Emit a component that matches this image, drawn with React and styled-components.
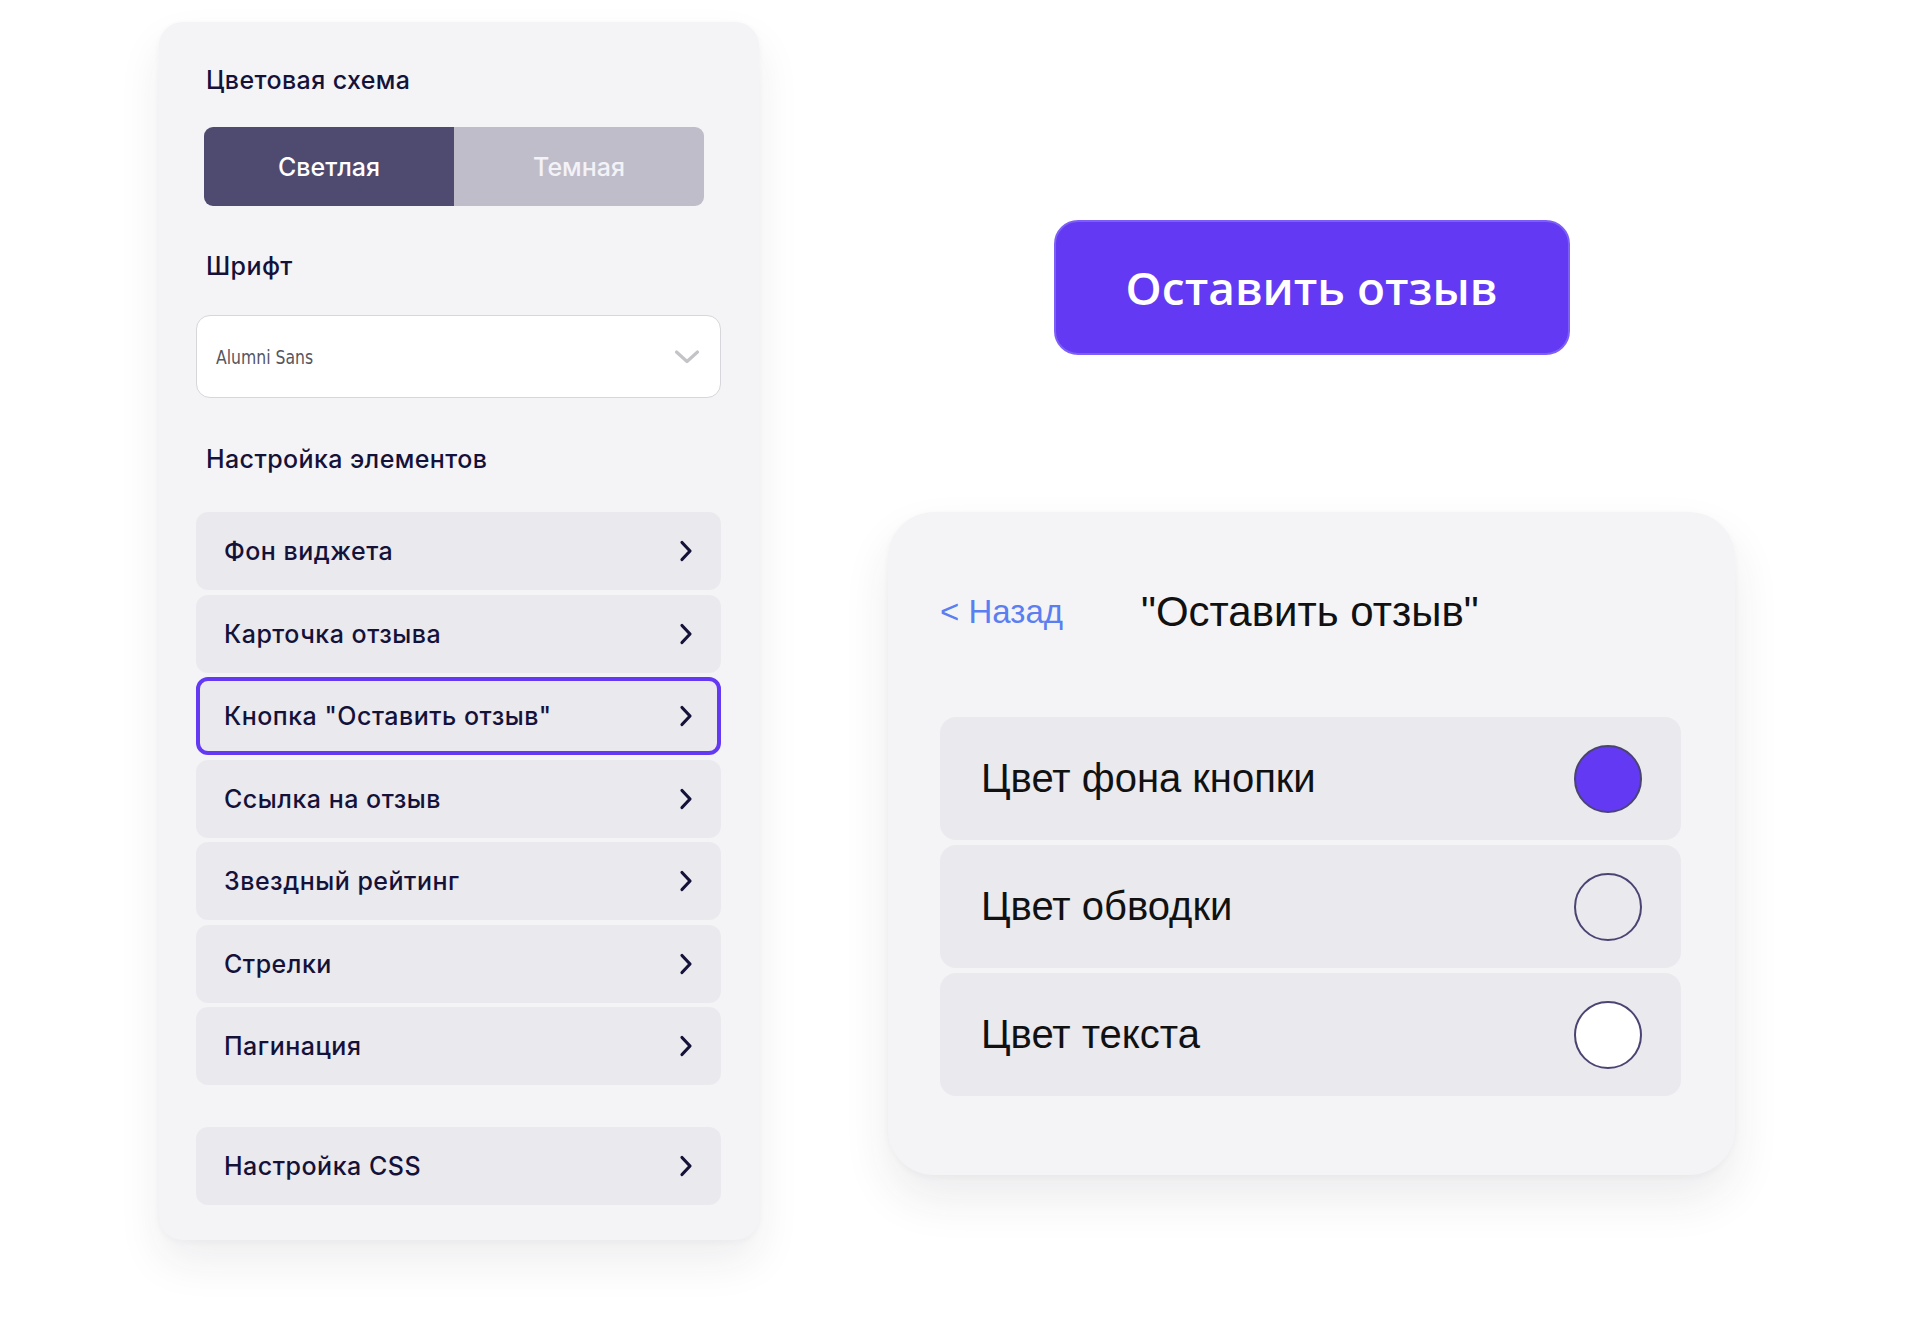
import React from 'react'
import styled, { createGlobalStyle, css } from 'styled-components'

const GlobalStyle = createGlobalStyle`
	body {
		margin: 0;
		background: #ffffff;
		font-family: Inter, "Noto Sans", sans-serif;
	}
`

const Page = styled.div`
	display: flex;
	align-items: flex-start;
	gap: 129px;
	padding: 22px 0 0 159px;
	min-height: 1299px;
`

// LEFT SETTINGS PANEL
const SettingsPanel = styled.div`
	width: 600px;
	box-sizing: border-box;
	padding: 43px 38px 35px 37px;
	background-color: #f4f4f6;
	border-radius: 24px;
	box-shadow: 0 22px 44px rgba(40, 40, 70, 0.08), 0 2px 6px rgba(40, 40, 70, 0.04);
	display: flex;
	flex-direction: column;
`
const Heading = styled.div`
	margin-left: 10px;
	font-size: 25px;
	line-height: 30px;
	font-weight: 500;
	color: #15123a;
	letter-spacing: 0.4px;
	margin-top: ${props => props.top || 0}px;
`
const Toggle = styled.div`
	display: flex;
	width: 500px;
	height: 79px;
	margin: 32px 0 0 8px;
	border-radius: 9px;
	overflow: hidden;
`
const ToggleOption = styled.div`
	flex: 1;
	display: flex;
	align-items: center;
	justify-content: center;
	font-size: 25px;
	font-weight: 500;
	color: #f3f2f7;
	background-color: #c0bdcb;
	${props =>
		props.active &&
		css`
			background-color: #4f4a6f;
			color: #ffffff;
		`
	};
`
const Select = styled.div`
	display: flex;
	align-items: center;
	justify-content: space-between;
	height: 83px;
	box-sizing: border-box;
	margin-top: 34px;
	padding: 0 20px 0 19px;
	background-color: #ffffff;
	border: 1.5px solid #d6d6db;
	border-radius: 14px;
`
const SelectValue = styled.span`
	font-family: "Liberation Sans Narrow", "DejaVu Sans Condensed", "Liberation Sans", sans-serif;
	font-size: 20px;
	color: #555560;
	transform: scaleX(0.87);
	transform-origin: left center;
`
const ItemList = styled.div`
	display: flex;
	flex-direction: column;
	gap: 4.5px;
	margin-top: ${props => props.top}px;
`
const Item = styled.div`
	display: flex;
	align-items: center;
	justify-content: space-between;
	height: 78px;
	box-sizing: border-box;
	padding: 0 28px 0 28px;
	background-color: #eae9ee;
	border-radius: 12px;
	font-size: 25px;
	font-weight: 500;
	color: #15123a;
	letter-spacing: 0.5px;
	${props =>
		props.selected &&
		css`
			border: 4px solid #6339f3;
			padding: 0 24px 0 24px;
		`
	};
`

const Chevron = () => (
	<svg width="14" height="22" viewBox="0 0 14 22" fill="none">
		<path d="M3 2.5 L11 11 L3 19.5" stroke="#15123a" strokeWidth="3.2" strokeLinecap="round" strokeLinejoin="round" />
	</svg>
)

const ChevronDown = () => (
	<svg width="26" height="16" viewBox="0 0 26 16" fill="none">
		<path d="M2.5 3 L13 12.5 L23.5 3" stroke="#c4c4c8" strokeWidth="3.2" strokeLinecap="round" strokeLinejoin="round" />
	</svg>
)

// RIGHT PREVIEW COLUMN
const PreviewColumn = styled.div`
	width: 847px;
	display: flex;
	flex-direction: column;
	align-items: center;
`
const ReviewButton = styled.div`
	margin-top: 198px;
	width: 516px;
	height: 135px;
	box-sizing: border-box;
	display: flex;
	align-items: center;
	justify-content: center;
	background-color: #6339f3;
	border: 2px solid #7d5ff6;
	border-radius: 24px;
	color: #ffffff;
	font-family: "Open Sans", "DejaVu Sans", sans-serif;
	font-weight: 600;
	font-size: 46px;
	padding-bottom: 2px;
`
const ElementPanel = styled.div`
	margin-top: 157px;
	width: 847px;
	box-sizing: border-box;
	padding: 80px 54px 79px 52px;
	background-color: #f4f4f6;
	border-radius: 46px;
	box-shadow: 0 24px 48px rgba(40, 40, 70, 0.09), 0 2px 6px rgba(40, 40, 70, 0.04);
	font-family: "Liberation Sans", Arial, sans-serif;
`
const PanelHeader = styled.div`
	display: flex;
	align-items: center;
	height: 40px;
	margin-bottom: 85px;
`
const BackLink = styled.span`
	font-size: 33px;
	color: #5b7ef0;
	width: 201px;
`
const PanelTitle = styled.span`
	font-size: 42px;
	color: #111111;
`
const ColorRows = styled.div`
	display: flex;
	flex-direction: column;
	gap: 5px;
`
const ColorRow = styled.div`
	display: flex;
	align-items: center;
	justify-content: space-between;
	height: 123px;
	padding: 0 39px 0 41px;
	background-color: #eae9ee;
	border-radius: 16px;
	font-size: 40px;
	color: #111111;
`
const Swatch = styled.div`
	width: 68px;
	height: 68px;
	box-sizing: border-box;
	border-radius: 50%;
	border: 2px solid #4a4472;
	background-color: ${props => props.fill || 'transparent'};
`

const items = [
	'Фон виджета',
	'Карточка отзыва',
	'Кнопка "Оставить отзыв"',
	'Ссылка на отзыв',
	'Звездный рейтинг',
	'Стрелки',
	'Пагинация',
]

const colors = [
	{ label: 'Цвет фона кнопки', fill: '#6339f3' },
	{ label: 'Цвет обводки', fill: null },
	{ label: 'Цвет текста', fill: '#ffffff' },
]

export default function App() {
	return (
		<>
			<GlobalStyle />
			<Page>
				<SettingsPanel>
					<Heading>Цветовая схема</Heading>
					<Toggle>
						<ToggleOption active>Светлая</ToggleOption>
						<ToggleOption>Темная</ToggleOption>
					</Toggle>
					<Heading top={45}>Шрифт</Heading>
					<Select>
						<SelectValue>Alumni Sans</SelectValue>
						<ChevronDown />
					</Select>
					<Heading top={46}>Настройка элементов</Heading>
					<ItemList top={38}>
						{items.map(name => (
							<Item key={name} selected={name.startsWith('Кнопка')}>
								{name}
								<Chevron />
							</Item>
						))}
					</ItemList>
					<ItemList top={42}>
						<Item>
							Настройка CSS
							<Chevron />
						</Item>
					</ItemList>
				</SettingsPanel>
				<PreviewColumn>
					<ReviewButton>Оставить отзыв</ReviewButton>
					<ElementPanel>
						<PanelHeader>
							<BackLink>&lt; Назад</BackLink>
							<PanelTitle>"Оставить отзыв"</PanelTitle>
						</PanelHeader>
						<ColorRows>
							{colors.map(c => (
								<ColorRow key={c.label}>
									{c.label}
									<Swatch fill={c.fill} />
								</ColorRow>
							))}
						</ColorRows>
					</ElementPanel>
				</PreviewColumn>
			</Page>
		</>
	)
}
